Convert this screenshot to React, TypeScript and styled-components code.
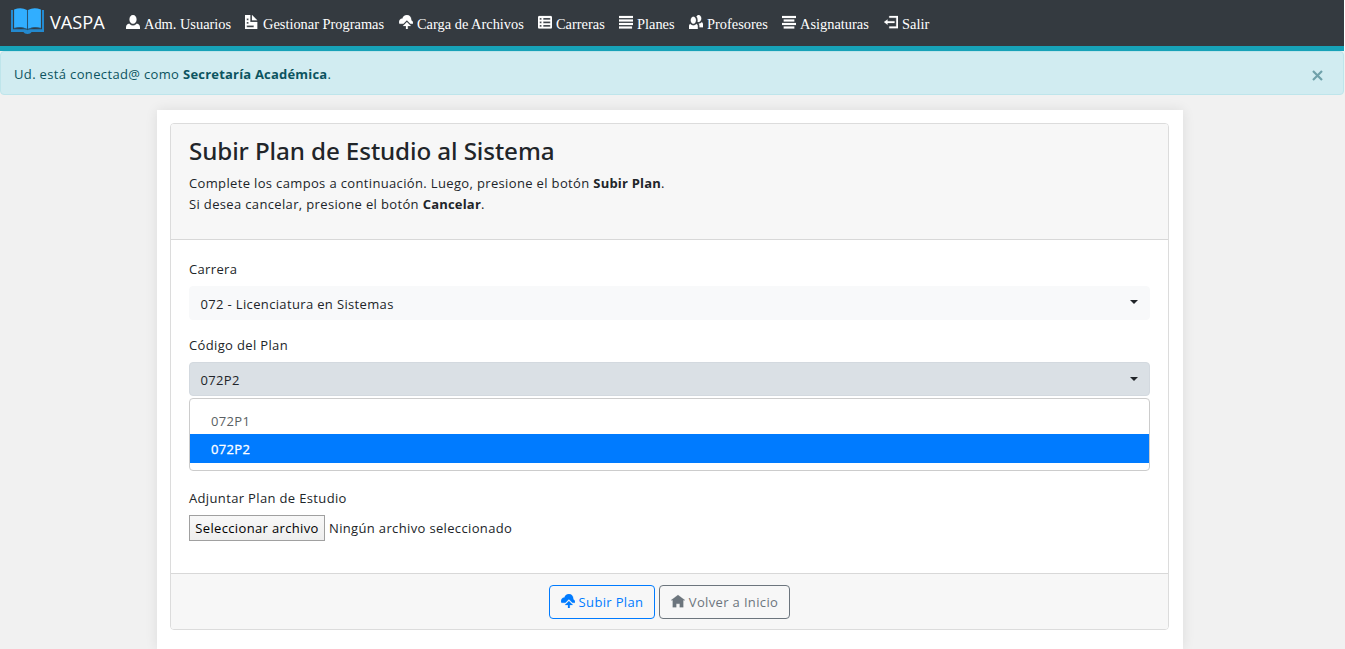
import React from "react";
import styled, { createGlobalStyle, css } from "styled-components";

const Global = createGlobalStyle`
  *, *::before, *::after { box-sizing: border-box; }
  html { background: #f1f1f1; }
  body {
    margin: 0; height: 649px; overflow: hidden; background: #f1f1f1; color: #212529;
    font-family: "Open Sans", "Noto Sans", sans-serif; font-size: 13px; line-height: 21px; letter-spacing: .35px;
  }
  h1, p { margin: 0; }
  strong { letter-spacing: .2px; }
  button { font: inherit; letter-spacing: inherit; margin: 0; }
`;

const Page = styled.div`width: 1345px; height: 649px; overflow: hidden; padding-right: 1px; display: flex; flex-direction: column;`;
const Navbar = styled.header`
  flex: none; height: 51px; display: flex; align-items: center; padding: 0 0 2px 11px;
  background: #343a40; border-bottom: 5px solid #17a2b8; color: #fff; box-shadow: 1px 0 #fff;
`;
const Brand = styled.a`
  display: flex; align-items: center; gap: 6px; width: 115px; font-size: 18.2px; line-height: 28px; letter-spacing: 0;
  svg { width: 33px; height: 26px; margin-top: -2px; }
`;
const Menu = styled.nav`
  display: flex; gap: 14px; padding-top: 4px;
  font-family: "Liberation Serif", serif; font-size: 14.4px; line-height: 20px; letter-spacing: 0;
`;
const MenuItem = styled.a<{ $width: number }>`
  display: flex; align-items: center; gap: 4px; width: ${p => p.$width}px; white-space: nowrap;
  svg { margin-top: -4px; }
`;
const Glyph = styled.svg`width: 14px; height: 14px; flex: none; fill: currentColor;`;

const Alert = styled.div`
  flex: none; height: 44px; display: flex; align-items: center; justify-content: space-between; padding: 2px 20px 0 13px;
  background: #d1ecf1; border: 1px solid #bee5eb; border-radius: 4px; color: #0c5460;
`;
const Close = styled.button`
  border: 0; padding: 0; background: none; line-height: 0; color: #6fa1aa;
  svg { width: 11px; height: 11px; display: block; margin-top: 2px; stroke: currentColor; stroke-width: 2.2; }
`;
const Sheet = styled.main`
  margin: 15px 0 0 157px; width: 1026px; flex: 1; padding: 13px;
  background: #fff; box-shadow: 0 0 12px rgba(0, 0, 0, .09);
`;
const Card = styled.section`
  width: 999px; height: 507px; display: flex; flex-direction: column;
  border: 1px solid #dcdcdc; border-radius: 4px; background: #fff;
`;
const CardHeader = styled.div`height: 116px; padding: 11px 18px; background: #f7f7f7; border-bottom: 1px solid #d8d8d8; border-radius: 3px 3px 0 0;`;
const Title = styled.h1`
  font-family: "Noto Sans", sans-serif; font-size: 24.2px; line-height: 32px; font-weight: 500;
  letter-spacing: -.1px; margin-bottom: 6px;
`;
const CardBody = styled.div`flex: 1; padding: 19px 18px 0;`;
const CardFooter = styled.div`
  height: 56px; display: flex; justify-content: center; gap: 4px; padding-top: 11px;
  background: #f7f7f7; border-top: 1px solid #d8d8d8; border-radius: 0 0 3px 3px;
`;
const Field = styled.div<{ $height: number }>`position: relative; height: ${p => p.$height}px;`;
const Label = styled.label`display: block; height: 27px;`;
const Select = styled.button<{ $open?: boolean }>`
  width: 961px; height: 34px; display: flex; align-items: center; justify-content: space-between;
  padding: 3px 11px 0 10.5px; border-radius: 4px; color: #212529;
  border: 1px solid ${p => (p.$open ? "#d3d9df" : "#f8f9fa")};
  background: ${p => (p.$open ? "#dae0e5" : "#f8f9fa")};
`;
const Caret = styled.span<{ $low?: boolean }>`
  border: 4px solid transparent; border-top-color: currentColor; border-bottom: 0;
  margin-top: ${p => (p.$low ? -4 : -6)}px;
`;
const Options = styled.div`
  position: absolute; top: 63px; left: 0; width: 961px; height: 73px; padding: 6px 0;
  background: #fff; border: 1px solid #ccc; border-radius: 4px;
`;
const Option = styled.div<{ $active?: boolean }>`
  height: 29px; line-height: 32px; padding-left: 21px; color: #5a5f63;
  ${p => p.$active && css`line-height: 31px; background: #007bff; color: #fff; -webkit-text-stroke: .3px #fff;`}
`;
const FileRow = styled.div`display: flex; align-items: center; gap: 4px;`;
const FileButton = styled.button`
  width: 136px; height: 26px; padding: 0; white-space: nowrap; color: #000; border: 1px solid #a0a0a0;
  background: linear-gradient(#f8f8f8, #eee);
`;
const Action = styled.button<{ $tone: string; $width: number }>`
  width: ${p => p.$width}px; height: 34px; display: flex; align-items: center; justify-content: center; gap: 4px;
  padding: 0; white-space: nowrap; color: ${p => p.$tone}; border: 1px solid ${p => p.$tone}; border-radius: 4px; background: transparent;
  svg { margin-top: -2px; }
`;

const shapes = {
  person: "M4 0c-1.1 0-2 1.12-2 2.5s.9 2.5 2 2.5 2-1.12 2-2.5-.9-2.5-2-2.5zm-2.09 5c-1.06.05-1.91.92-1.91 2v1h8v-1c0-1.08-.84-1.95-1.91-2-.54.61-1.28 1-2.09 1-.81 0-1.55-.39-2.09-1z",
  document: "M0 0v8h7v-4h-4v-4h-3zm4 0v3h3l-3-3zm-3 2h1v1h-1v-1zm0 2h1v1h-1v-1zm0 2h4v1h-4v-1z",
  upload: "M4.5 0c-1.21 0-2.27.86-2.5 2-1.1 0-2 .9-2 2 0 .37.11.71.28 1h2.22l2-2 2 2h1.41c.06-.16.09-.32.09-.5 0-.65-.42-1.29-1-1.5v-.5c0-1.38-1.12-2.5-2.5-2.5zm0 4l-2.25 2.25h1.75v1.75h1v-1.75h1.75z",
  sheet: "M.75 .57c-.41 0-.75.34-.75.75v5.7c0 .41.34.75.75.75h6.5c.41 0 .75-.34.75-.75v-5.7c0-.41-.34-.75-.75-.75h-6.5zm.25 1.14h1v1h-1v-1zm2 0h4v1h-4v-1zm-2 2h1v1h-1v-1zm2 0h4v1h-4v-1zm-2 2h1v1h-1v-1zm2 0h4v1h-4v-1z",
  lines: "M0 .57h8v1.14h-8zM0 2.57h8v1.14h-8zM0 4.57h8v1.14h-8zM0 6.57h7.4v1.14h-7.4z",
  centered: "M0 .57h8v1.14h-8zM1 2.57h6v1.14h-6zM0 4.57h8v1.14h-8zM1 6.57h6v1.14h-6z",
  people: "M5.5 0c-.51 0-.95.35-1.22.88.45.54.72 1.28.72 2.13 0 .29-.03.55-.09.81.19.11.38.19.59.19.83 0 1.5-.9 1.5-2s-.67-2-1.5-2zm-3 1c-.83 0-1.5.9-1.5 2s.67 2 1.5 2 1.5-.9 1.5-2-.67-2-1.5-2zm4.75 3.16c-.43.51-1.02.82-1.69.84.27.38.44.84.44 1.34v.66h2v-1.66c0-.52-.31-.97-.75-1.19zm-6.5 1c-.44.22-.75.67-.75 1.19v1.66h5v-1.66c0-.52-.31-.97-.75-1.19-.45.53-1.06.84-1.75.84s-1.3-.32-1.75-.84z",
  exit: "M3 .57v1h4v5h-4v1h5v-7h-5zm-1 2l-2 1.5 2 1.5v-1h4v-1h-4v-1z",
  home: "M4 .57l-4 3h1v4h2v-2h2v2h2v-4.03l1 .03-4-3z",
};
type Shape = keyof typeof shapes;
const Icon = ({ name }: { name: Shape }) => <Glyph viewBox="0 0 8 8"><path d={shapes[name]} stroke="currentColor" strokeWidth=".12" /></Glyph>;

const menu: [Shape, string, number][] = [
  ["person", "Adm. Usuarios", 105],
  ["document", "Gestionar Programas", 140],
  ["upload", "Carga de Archivos", 125],
  ["sheet", "Carreras", 67],
  ["lines", "Planes", 56],
  ["people", "Profesores", 79],
  ["centered", "Asignaturas", 88],
  ["exit", "Salir", 46],
];

const Book = () => (
  <svg viewBox="0 0 32 27" preserveAspectRatio="none">
    <path d="M0 2h2v20h11q3 0 3 1 0-1 3-1h11V2h2v23H20q-1 2-4 2t-4-2H0z" fill="#2389cf" />
    <path d="M3 1.5Q10-1 15.5 2v20Q10 18.5 3 21zM29 1.5Q22-1 16.5 2v20Q22 18.5 29 21z" fill="#31aeff" />
    <path d="M16 2v20M3 21q7-2 13 1 6-3 13-1" fill="none" stroke="#235b82" strokeWidth=".8" />
  </svg>
);

export default function App() {
  return (
    <Page>
      <Global />
      <Navbar>
        <Brand><Book />VASPA</Brand>
        <Menu>
          {menu.map(([icon, text, width]) => (
            <MenuItem key={text} $width={width}><Icon name={icon} />{text}</MenuItem>
          ))}
        </Menu>
      </Navbar>
      <Alert>
        <span>Ud. está conectad@ como <strong>Secretaría Académica</strong>.</span>
        <Close aria-label="Cerrar"><svg viewBox="0 0 11 11"><path d="M1 1l9 9M10 1l-9 9" /></svg></Close>
      </Alert>
      <Sheet>
        <Card>
          <CardHeader>
            <Title>Subir Plan de Estudio al Sistema</Title>
            <p>Complete los campos a continuación. Luego, presione el botón <strong>Subir Plan</strong>.</p>
            <p>Si desea cancelar, presione el botón <strong>Cancelar</strong>.</p>
          </CardHeader>
          <CardBody>
            <Field $height={76}>
              <Label>Carrera</Label>
              <Select>072 - Licenciatura en Sistemas<Caret /></Select>
            </Field>
            <Field $height={153}>
              <Label>Código del Plan</Label>
              <Select $open>072P2<Caret $low /></Select>
              <Options>
                <Option>072P1</Option>
                <Option $active>072P2</Option>
              </Options>
            </Field>
            <Field $height={60}>
              <Label>Adjuntar Plan de Estudio</Label>
              <FileRow><FileButton>Seleccionar archivo</FileButton><span>Ningún archivo seleccionado</span></FileRow>
            </Field>
          </CardBody>
          <CardFooter>
            <Action $tone="#007bff" $width={106}><Icon name="upload" />Subir Plan</Action>
            <Action $tone="#6c757d" $width={131}><Icon name="home" />Volver a Inicio</Action>
          </CardFooter>
        </Card>
      </Sheet>
    </Page>
  );
}
